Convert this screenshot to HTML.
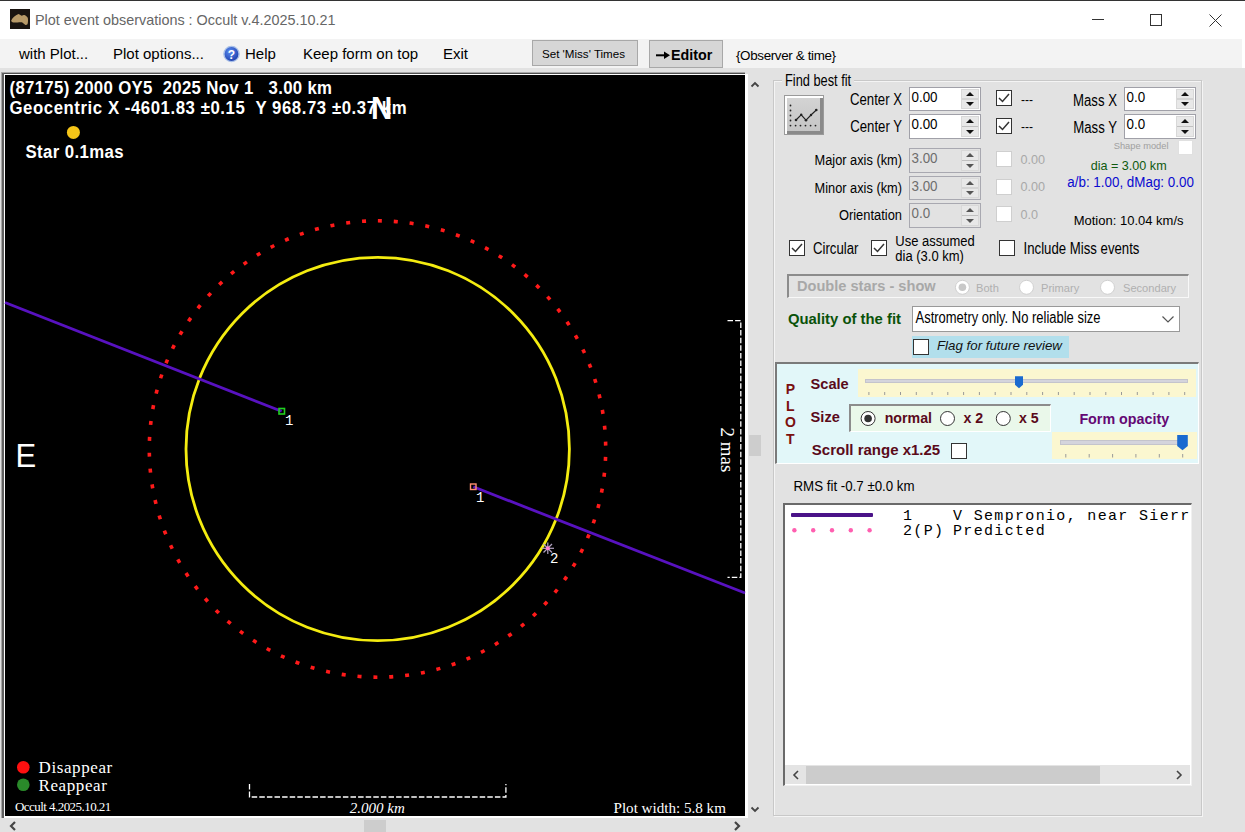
<!DOCTYPE html><html><head><meta charset="utf-8"><style>
html,body{margin:0;padding:0;}
body{width:1245px;height:832px;overflow:hidden;position:relative;background:#e2e2e2;font-family:"Liberation Sans",sans-serif;}
.t{position:absolute;white-space:pre;}
.b{position:absolute;box-sizing:border-box;}
svg{position:absolute;left:0;top:0;}
</style></head><body>
<div class="b" style="left:0px;top:0px;width:1245px;height:39px;background:#fff;"></div>
<div class="b" style="left:0px;top:0px;width:1245px;height:1px;background:#333;"></div>
<svg width="1245" height="40" style="left:0;top:0">
<rect x="10" y="9" width="20" height="20" fill="#1a1410"/>
<path d="M11.2 20.5 C12.5 18 15 15.5 18.5 14.1 C20 14.5 21 15.8 21.8 15.8 C23 15 23.8 14.8 24.5 15.1 C26.5 16 27.8 17.5 27.9 18.5 C28.2 21 27.9 23.5 27.5 24.2 C26.8 25 25.8 25 25.5 24.9 C24 24 23 22.5 21.8 22.2 C19 22 15.5 22.8 13.4 22.5 C12 22.2 11.2 21.5 11.2 20.5Z" fill="#b89a68"/>
<line x1="1092" y1="19.5" x2="1104" y2="19.5" stroke="#333" stroke-width="1"/>
<rect x="1150.5" y="14.5" width="11" height="11" fill="none" stroke="#333" stroke-width="1"/>
<path d="M1209.5 14.5 L1221.5 26.5 M1221.5 14.5 L1209.5 26.5" stroke="#333" stroke-width="1"/>
</svg>
<div class="t" style="left:35px;top:12.81px;font-size:14.4px;line-height:14.4px;font-family:'Liberation Sans', sans-serif;font-weight:normal;font-style:normal;color:#666;">Plot event observations : Occult v.4.2025.10.21</div>
<div class="b" style="left:0px;top:39px;width:1245px;height:29px;background:#fff;"></div>
<div class="b" style="left:0px;top:39px;width:1242px;height:29px;background:#f3f3f3;"></div>
<div class="t" style="left:19px;top:46.30px;font-size:15px;line-height:15px;font-family:'Liberation Sans', sans-serif;font-weight:normal;font-style:normal;color:#000;">with Plot...</div>
<div class="t" style="left:113px;top:46.30px;font-size:15px;line-height:15px;font-family:'Liberation Sans', sans-serif;font-weight:normal;font-style:normal;color:#000;">Plot options...</div>
<svg width="1245" height="80" style="left:0;top:0">
<defs><radialGradient id="hg" cx="0.4" cy="0.35" r="0.7"><stop offset="0" stop-color="#5a8cf0"/><stop offset="1" stop-color="#1a3aa8"/></radialGradient></defs>
<circle cx="231.5" cy="54" r="7.6" fill="url(#hg)" stroke="#a8c0e8" stroke-width="1.4"/>
<text x="231.5" y="59" text-anchor="middle" font-family="Liberation Sans" font-weight="bold" font-size="12" fill="#fff">?</text>
</svg>
<div class="t" style="left:245px;top:46.30px;font-size:15px;line-height:15px;font-family:'Liberation Sans', sans-serif;font-weight:normal;font-style:normal;color:#000;">Help</div>
<div class="t" style="left:303px;top:46.30px;font-size:15px;line-height:15px;font-family:'Liberation Sans', sans-serif;font-weight:normal;font-style:normal;color:#000;">Keep form on top</div>
<div class="t" style="left:443px;top:46.30px;font-size:15px;line-height:15px;font-family:'Liberation Sans', sans-serif;font-weight:normal;font-style:normal;color:#000;">Exit</div>
<div class="b" style="left:532px;top:40px;width:106px;height:26px;background:#d6d6d6;border:1px solid #a8a8a8;"></div>
<div class="t" style="left:542px;top:47.68px;font-size:11.6px;line-height:11.6px;font-family:'Liberation Sans', sans-serif;font-weight:normal;font-style:normal;color:#000;">Set &#x27;Miss&#x27; Times</div>
<div class="b" style="left:649px;top:40px;width:74px;height:28px;background:#d6d6d6;border:1px solid #a8a8a8;"></div>
<div class="t" style="left:671px;top:47.60px;font-size:14.3px;line-height:14.3px;font-family:'Liberation Sans', sans-serif;font-weight:bold;font-style:normal;color:#000;">Editor</div>
<svg width="1245" height="80" style="left:0;top:0"><path d="M656 55.3 H666" stroke="#000" stroke-width="2"/><path d="M664 51.5 L670 55.3 L664 59.1Z" fill="#000"/></svg>
<div class="t" style="left:736px;top:49.46px;font-size:13.4px;line-height:13.4px;font-family:'Liberation Sans', sans-serif;font-weight:normal;font-style:normal;color:#000;letter-spacing:-0.35px;">{Observer &amp; time}</div>
<div class="b" style="left:4px;top:74px;width:744px;height:744px;background:#fff;"></div>
<div class="b" style="left:1px;top:72px;width:744px;height:1px;background:#a8a8a8;"></div>
<div class="b" style="left:1px;top:73px;width:744px;height:1px;background:#505050;"></div>
<div class="b" style="left:1px;top:72px;width:1px;height:746px;background:#a8a8a8;"></div>
<div class="b" style="left:2px;top:73px;width:2px;height:745px;background:#606060;"></div>
<div class="b" style="left:5px;top:75px;width:740px;height:741px;background:#000;"></div>
<svg width="1245" height="832" style="left:0;top:0">
<path d="M751.5 86.5 L755 83 L758.5 86.5" stroke="#444" stroke-width="1.8" fill="none"/>
<path d="M751.5 807.5 L755 811 L758.5 807.5" stroke="#444" stroke-width="1.8" fill="none"/>
<rect x="749" y="435" width="12" height="21" fill="#cdcdcd"/>
<path d="M15 822 L11 826 L15 830" stroke="#444" stroke-width="2.2" fill="none"/>
<path d="M735 822 L739 826 L735 830" stroke="#444" stroke-width="2.2" fill="none"/>
<rect x="364" y="820" width="22" height="12" fill="#cdcdcd"/>
</svg>
<svg width="1245" height="832" style="left:0;top:0">
<circle cx="377.5" cy="449" r="228.2" fill="none" stroke="#ff1a1a" stroke-width="3.6" stroke-dasharray="4 11.931" stroke-dashoffset="-7.95"/>
<circle cx="377.7" cy="449" r="191.7" fill="none" stroke="#f4ec10" stroke-width="2.8"/>
<line x1="5" y1="302.5" x2="281.6" y2="411.3" stroke="#5812c0" stroke-width="2.8"/>
<line x1="473.3" y1="486.8" x2="745" y2="593" stroke="#5812c0" stroke-width="2.8"/>
<rect x="279" y="408.5" width="5.5" height="5.5" fill="none" stroke="#20d020" stroke-width="1.6"/>
<rect x="470.5" y="484" width="5.5" height="5.5" fill="none" stroke="#ff9070" stroke-width="1.4"/>
<g stroke="#b0a0c0" stroke-width="1.2">
<line x1="542" y1="548.3" x2="554" y2="548.3"/><line x1="547.8" y1="542.5" x2="547.8" y2="554"/>
<line x1="543.5" y1="544" x2="552" y2="552.5"/><line x1="552" y1="544" x2="543.5" y2="552.5"/>
</g>
<circle cx="547.8" cy="548.3" r="2" fill="#ff80d0"/>
<circle cx="73.4" cy="132.4" r="6.5" fill="#f5c518"/>
<circle cx="23.3" cy="767.3" r="6.3" fill="#ff1010"/>
<circle cx="23.3" cy="784.7" r="6.3" fill="#2a8a2a"/>
<g stroke="#fff" stroke-width="1.3" stroke-dasharray="5.5 2.1" fill="none">
<path d="M727.5 320.6 L740.8 320.6 L740.8 577.4 L727.5 577.4"/>
<path d="M249.5 784 L249.5 797 L505.9 797 L505.9 784"/>
</g>
</svg>
<div class="t" style="left:9.5px;top:80.78px;font-size:16.8px;line-height:16.8px;font-family:'Liberation Sans', sans-serif;font-weight:bold;font-style:normal;color:#fff;letter-spacing:0.32px;transform:scaleY(1.08);transform-origin:0 14.22px;">(87175) 2000 OY5  2025 Nov 1   3.00 km</div>
<div class="t" style="left:9.5px;top:100.78px;font-size:16.8px;line-height:16.8px;font-family:'Liberation Sans', sans-serif;font-weight:bold;font-style:normal;color:#fff;letter-spacing:0.55px;transform:scaleY(1.08);transform-origin:0 14.22px;">Geocentric X -4601.83 ±0.15  Y 968.73 ±0.37 km</div>
<div class="t" style="left:25.5px;top:144.78px;font-size:16.8px;line-height:16.8px;font-family:'Liberation Sans', sans-serif;font-weight:bold;font-style:normal;color:#fff;letter-spacing:0.38px;transform:scaleY(1.05);transform-origin:0 14.22px;">Star 0.1mas</div>
<div class="t" style="left:371px;top:94.03px;font-size:29.5px;line-height:29.5px;font-family:'Liberation Sans', sans-serif;font-weight:bold;font-style:normal;color:#fff;transform:scaleY(1.08);transform-origin:0 24.97px;">N</div>
<div class="t" style="left:15.5px;top:440.76px;font-size:31px;line-height:31px;font-family:'Liberation Sans', sans-serif;font-weight:normal;font-style:normal;color:#fff;transform:scaleY(1.05);transform-origin:0 26.24px;">E</div>
<div class="t" style="left:285px;top:414.27px;font-size:14px;line-height:14px;font-family:'Liberation Mono', monospace;font-weight:normal;font-style:normal;color:#fff;">1</div>
<div class="t" style="left:476px;top:490.97px;font-size:14px;line-height:14px;font-family:'Liberation Mono', monospace;font-weight:normal;font-style:normal;color:#fff;">1</div>
<div class="t" style="left:550px;top:551.87px;font-size:14px;line-height:14px;font-family:'Liberation Mono', monospace;font-weight:normal;font-style:normal;color:#fff;">2</div>
<div class="t" style="left:38.5px;top:759.36px;font-size:17px;line-height:17px;font-family:'Liberation Serif', serif;font-weight:normal;font-style:normal;color:#fff;letter-spacing:0.6px;">Disappear</div>
<div class="t" style="left:38.5px;top:777.16px;font-size:17px;line-height:17px;font-family:'Liberation Serif', serif;font-weight:normal;font-style:normal;color:#fff;letter-spacing:0.6px;">Reappear</div>
<div class="t" style="left:15px;top:800.31px;font-size:13px;line-height:13px;font-family:'Liberation Serif', serif;font-weight:normal;font-style:normal;color:#fff;letter-spacing:-0.55px;">Occult 4.2025.10.21</div>
<div class="t" style="left:613.5px;top:801.15px;font-size:15.1px;line-height:15.1px;font-family:'Liberation Serif', serif;font-weight:normal;font-style:normal;color:#fff;">Plot width: 5.8 km</div>
<div class="t" style="left:349.8px;top:801.14px;font-size:15px;line-height:15px;font-family:'Liberation Serif', serif;font-weight:normal;font-style:italic;color:#fff;">2.000 km</div>
<div class="t" style="left:696.5px;top:441px;width:60px;height:18px;font-family:'Liberation Serif';font-size:19px;line-height:18px;color:#fff;transform-origin:30px 9px;transform:rotate(90deg);text-align:center;">2 mas</div>
<div class="b" style="left:773px;top:80px;width:429px;height:736px;border:1px solid #c8c8c8;box-shadow:1px 1px 0 #f4f4f4, inset 1px 1px 0 #f4f4f4;"></div>
<div class="b" style="left:782px;top:74px;width:72px;height:12px;background:#e2e2e2;"></div>
<div class="t" style="left:785px;top:76.16px;font-size:12.8px;line-height:12.8px;font-family:'Liberation Sans', sans-serif;font-weight:normal;font-style:normal;color:#000;transform:scaleY(1.25);transform-origin:0 10.84px;">Find best fit</div>
<div class="b" style="left:784px;top:95px;width:40px;height:40px;background:linear-gradient(#d4d4d4,#c4c4c4);border:1px solid #9a9a9a;box-shadow:inset 2px 2px 0 #fff, inset -3px -3px 0 #8a8a8a;"></div>
<svg width="1245" height="832" style="left:0;top:0">
<g fill="#222"><circle cx="790.5" cy="105.5" r="0.9"/><circle cx="790.5" cy="110.5" r="0.9"/><circle cx="790.5" cy="115.5" r="0.9"/><circle cx="790.5" cy="120.5" r="0.9"/><circle cx="790.5" cy="125.6" r="0.9"/>
<circle cx="795.6" cy="125.6" r="0.9"/><circle cx="800.5" cy="125.6" r="0.9"/><circle cx="805.5" cy="125.6" r="0.9"/><circle cx="810.6" cy="125.6" r="0.9"/><circle cx="815.5" cy="125.6" r="0.9"/>
<circle cx="796" cy="120" r="1.3"/><circle cx="801.2" cy="114.8" r="1.2"/><circle cx="806" cy="120.2" r="1.3"/><circle cx="811" cy="115" r="1.2"/><circle cx="816.3" cy="110" r="1.3"/></g>
<polyline points="796,120 801.2,114.8 806,120.2 811,115 816.3,110" fill="none" stroke="#222" stroke-width="1.1"/>
</svg>
<div class="t" style="right:343px;top:93.83px;font-size:13.2px;line-height:13.2px;font-family:'Liberation Sans', sans-serif;font-weight:normal;font-style:normal;color:#000;transform:scaleY(1.2);transform-origin:0 11.17px;">Center X</div>
<div class="t" style="right:343px;top:121.33px;font-size:13.2px;line-height:13.2px;font-family:'Liberation Sans', sans-serif;font-weight:normal;font-style:normal;color:#000;transform:scaleY(1.2);transform-origin:0 11.17px;">Center Y</div>
<div class="b" style="left:909px;top:87px;width:72px;height:24px;background:#fff;border:1px solid #a0a0a8;"></div>
<div class="b" style="left:961px;top:89px;width:18px;height:20px;background:#e8e8e8;border:1px solid #d8d8d8;"></div>
<svg width="1245" height="832" style="left:0;top:0"><path d="M966 96 L970 92 L974 96Z M966 102 L970 106 L974 102Z" fill="#111"/><line x1="962" y1="99.0" x2="978" y2="99.0" stroke="#c0c0c0"/></svg>
<div class="t" style="left:911.5px;top:91.16px;font-size:13.4px;line-height:13.4px;font-family:'Liberation Sans', sans-serif;font-weight:normal;font-style:normal;color:#000;transform:scaleY(1.12);transform-origin:0 80%;">0.00</div>
<div class="b" style="left:909px;top:114px;width:72px;height:25px;background:#fff;border:1px solid #a0a0a8;"></div>
<div class="b" style="left:961px;top:116px;width:18px;height:21px;background:#e8e8e8;border:1px solid #d8d8d8;"></div>
<svg width="1245" height="832" style="left:0;top:0"><path d="M966 123 L970 119 L974 123Z M966 130 L970 134 L974 130Z" fill="#111"/><line x1="962" y1="126.5" x2="978" y2="126.5" stroke="#c0c0c0"/></svg>
<div class="t" style="left:911.5px;top:118.16px;font-size:13.4px;line-height:13.4px;font-family:'Liberation Sans', sans-serif;font-weight:normal;font-style:normal;color:#000;transform:scaleY(1.12);transform-origin:0 80%;">0.00</div>
<div class="b" style="left:996px;top:90px;width:16px;height:16px;background:#fff;border:1px solid #333;"></div>
<svg width="1245" height="832" style="left:0;top:0"><path d="M999 98 L1002.5 101.5 L1009 94" fill="none" stroke="#333" stroke-width="1.5"/></svg>
<div class="b" style="left:996px;top:118px;width:16px;height:16px;background:#fff;border:1px solid #333;"></div>
<svg width="1245" height="832" style="left:0;top:0"><path d="M999 126 L1002.5 129.5 L1009 122" fill="none" stroke="#333" stroke-width="1.5"/></svg>
<div class="t" style="left:1021px;top:93.84px;font-size:12px;line-height:12px;font-family:'Liberation Sans', sans-serif;font-weight:normal;font-style:normal;color:#000;">---</div>
<div class="t" style="left:1021px;top:121.34px;font-size:12px;line-height:12px;font-family:'Liberation Sans', sans-serif;font-weight:normal;font-style:normal;color:#000;">---</div>
<div class="t" style="right:128px;top:94.53px;font-size:13.2px;line-height:13.2px;font-family:'Liberation Sans', sans-serif;font-weight:normal;font-style:normal;color:#000;transform:scaleY(1.2);transform-origin:0 11.17px;">Mass X</div>
<div class="t" style="right:128px;top:122.23px;font-size:13.2px;line-height:13.2px;font-family:'Liberation Sans', sans-serif;font-weight:normal;font-style:normal;color:#000;transform:scaleY(1.2);transform-origin:0 11.17px;">Mass Y</div>
<div class="b" style="left:1124px;top:87px;width:72px;height:24px;background:#fff;border:1px solid #a0a0a8;"></div>
<div class="b" style="left:1176px;top:89px;width:18px;height:20px;background:#e8e8e8;border:1px solid #d8d8d8;"></div>
<svg width="1245" height="832" style="left:0;top:0"><path d="M1181 96 L1185 92 L1189 96Z M1181 102 L1185 106 L1189 102Z" fill="#111"/><line x1="1177" y1="99.0" x2="1193" y2="99.0" stroke="#c0c0c0"/></svg>
<div class="t" style="left:1126.5px;top:91.16px;font-size:13.4px;line-height:13.4px;font-family:'Liberation Sans', sans-serif;font-weight:normal;font-style:normal;color:#000;transform:scaleY(1.12);transform-origin:0 80%;">0.0</div>
<div class="b" style="left:1124px;top:114px;width:72px;height:25px;background:#fff;border:1px solid #a0a0a8;"></div>
<div class="b" style="left:1176px;top:116px;width:18px;height:21px;background:#e8e8e8;border:1px solid #d8d8d8;"></div>
<svg width="1245" height="832" style="left:0;top:0"><path d="M1181 123 L1185 119 L1189 123Z M1181 130 L1185 134 L1189 130Z" fill="#111"/><line x1="1177" y1="126.5" x2="1193" y2="126.5" stroke="#c0c0c0"/></svg>
<div class="t" style="left:1126.5px;top:118.16px;font-size:13.4px;line-height:13.4px;font-family:'Liberation Sans', sans-serif;font-weight:normal;font-style:normal;color:#000;transform:scaleY(1.12);transform-origin:0 80%;">0.0</div>
<div class="t" style="left:1113.7px;top:141.63px;font-size:9.3px;line-height:9.3px;font-family:'Liberation Sans', sans-serif;font-weight:normal;font-style:normal;color:#a0a0a0;">Shape model</div>
<div class="b" style="left:1178px;top:140px;width:15px;height:15px;background:#fff;border:1px solid #e0e0e0;"></div>
<div class="t" style="right:343px;top:155.46px;font-size:12.8px;line-height:12.8px;font-family:'Liberation Sans', sans-serif;font-weight:normal;font-style:normal;color:#000;transform:scaleY(1.2);transform-origin:0 10.84px;">Major axis (km)</div>
<div class="t" style="right:343px;top:183.46px;font-size:12.8px;line-height:12.8px;font-family:'Liberation Sans', sans-serif;font-weight:normal;font-style:normal;color:#000;transform:scaleY(1.2);transform-origin:0 10.84px;">Minor axis (km)</div>
<div class="t" style="right:343px;top:210.08px;font-size:12.9px;line-height:12.9px;font-family:'Liberation Sans', sans-serif;font-weight:normal;font-style:normal;color:#000;transform:scaleY(1.2);transform-origin:0 10.92px;">Orientation</div>
<div class="b" style="left:909px;top:148px;width:72px;height:25px;background:#e2e2e2;border:1px solid #a8a8b0;"></div>
<div class="b" style="left:961px;top:150px;width:18px;height:21px;background:#e8e8e8;border:1px solid #d8d8d8;"></div>
<svg width="1245" height="832" style="left:0;top:0"><path d="M966 157 L970 153 L974 157Z M966 164 L970 168 L974 164Z" fill="#555"/><line x1="962" y1="160.5" x2="978" y2="160.5" stroke="#c0c0c0"/></svg>
<div class="t" style="left:911.5px;top:152.16px;font-size:13.4px;line-height:13.4px;font-family:'Liberation Sans', sans-serif;font-weight:normal;font-style:normal;color:#6d6d6d;transform:scaleY(1.12);transform-origin:0 80%;">3.00</div>
<div class="b" style="left:909px;top:176px;width:72px;height:24px;background:#e2e2e2;border:1px solid #a8a8b0;"></div>
<div class="b" style="left:961px;top:178px;width:18px;height:20px;background:#e8e8e8;border:1px solid #d8d8d8;"></div>
<svg width="1245" height="832" style="left:0;top:0"><path d="M966 185 L970 181 L974 185Z M966 191 L970 195 L974 191Z" fill="#555"/><line x1="962" y1="188.0" x2="978" y2="188.0" stroke="#c0c0c0"/></svg>
<div class="t" style="left:911.5px;top:180.16px;font-size:13.4px;line-height:13.4px;font-family:'Liberation Sans', sans-serif;font-weight:normal;font-style:normal;color:#6d6d6d;transform:scaleY(1.12);transform-origin:0 80%;">3.00</div>
<div class="b" style="left:909px;top:203px;width:72px;height:25px;background:#e2e2e2;border:1px solid #a8a8b0;"></div>
<div class="b" style="left:961px;top:205px;width:18px;height:21px;background:#e8e8e8;border:1px solid #d8d8d8;"></div>
<svg width="1245" height="832" style="left:0;top:0"><path d="M966 212 L970 208 L974 212Z M966 219 L970 223 L974 219Z" fill="#555"/><line x1="962" y1="215.5" x2="978" y2="215.5" stroke="#c0c0c0"/></svg>
<div class="t" style="left:911.5px;top:207.16px;font-size:13.4px;line-height:13.4px;font-family:'Liberation Sans', sans-serif;font-weight:normal;font-style:normal;color:#6d6d6d;transform:scaleY(1.12);transform-origin:0 80%;">0.0</div>
<div class="b" style="left:996px;top:151px;width:16px;height:16px;background:#fff;border:1px solid #cfcfcf;"></div>
<div class="b" style="left:996px;top:179px;width:16px;height:16px;background:#fff;border:1px solid #cfcfcf;"></div>
<div class="b" style="left:996px;top:206px;width:16px;height:16px;background:#fff;border:1px solid #cfcfcf;"></div>
<div class="t" style="left:1020.4px;top:153.83px;font-size:12.6px;line-height:12.6px;font-family:'Liberation Sans', sans-serif;font-weight:normal;font-style:normal;color:#a8a8a8;">0.00</div>
<div class="t" style="left:1020.4px;top:181.33px;font-size:12.6px;line-height:12.6px;font-family:'Liberation Sans', sans-serif;font-weight:normal;font-style:normal;color:#a8a8a8;">0.00</div>
<div class="t" style="left:1020.4px;top:208.83px;font-size:12.6px;line-height:12.6px;font-family:'Liberation Sans', sans-serif;font-weight:normal;font-style:normal;color:#a8a8a8;">0.0</div>
<div class="t" style="left:1090.7px;top:159.83px;font-size:12.6px;line-height:12.6px;font-family:'Liberation Sans', sans-serif;font-weight:normal;font-style:normal;color:#105a10;transform:scaleY(1.08);transform-origin:0 10.67px;">dia = 3.00 km</div>
<div class="t" style="left:1067.3px;top:176.16px;font-size:13.4px;line-height:13.4px;font-family:'Liberation Sans', sans-serif;font-weight:normal;font-style:normal;color:#0a0ad0;transform:scaleY(1.05);transform-origin:0 11.34px;">a/b: 1.00, dMag: 0.00</div>
<div class="t" style="left:1073.7px;top:213.70px;font-size:13px;line-height:13px;font-family:'Liberation Sans', sans-serif;font-weight:normal;font-style:normal;color:#000;">Motion: 10.04 km/s</div>
<div class="b" style="left:789px;top:240px;width:16px;height:16px;background:#fff;border:1px solid #333;"></div>
<svg width="1245" height="832" style="left:0;top:0"><path d="M792 248 L795.5 251.5 L802 244" fill="none" stroke="#333" stroke-width="1.5"/></svg>
<div class="t" style="left:813px;top:242.53px;font-size:13.2px;line-height:13.2px;font-family:'Liberation Sans', sans-serif;font-weight:normal;font-style:normal;color:#000;transform:scaleY(1.2);transform-origin:0 11.17px;">Circular</div>
<div class="b" style="left:871px;top:240px;width:16px;height:16px;background:#fff;border:1px solid #333;"></div>
<svg width="1245" height="832" style="left:0;top:0"><path d="M874 248 L877.5 251.5 L884 244" fill="none" stroke="#333" stroke-width="1.5"/></svg>
<div class="t" style="left:895.3px;top:235.00px;font-size:13px;line-height:13px;font-family:'Liberation Sans', sans-serif;font-weight:normal;font-style:normal;color:#000;transform:scaleY(1.12);transform-origin:0 11.00px;">Use assumed</div>
<div class="t" style="left:895.3px;top:250.00px;font-size:13px;line-height:13px;font-family:'Liberation Sans', sans-serif;font-weight:normal;font-style:normal;color:#000;transform:scaleY(1.12);transform-origin:0 11.00px;">dia (3.0 km)</div>
<div class="b" style="left:999px;top:240px;width:16px;height:16px;background:#fff;border:1px solid #333;"></div>
<div class="t" style="left:1023.6px;top:242.53px;font-size:13.2px;line-height:13.2px;font-family:'Liberation Sans', sans-serif;font-weight:normal;font-style:normal;color:#000;transform:scaleY(1.2);transform-origin:0 11.17px;">Include Miss events</div>
<div class="b" style="left:787px;top:274px;width:402px;height:24px;border-top:2px solid #8c8c8c;border-left:2px solid #8c8c8c;border-bottom:1px solid #f8f8f8;border-right:1px solid #f8f8f8;"></div>
<div class="t" style="left:797px;top:278.84px;font-size:14.6px;line-height:14.6px;font-family:'Liberation Sans', sans-serif;font-weight:bold;font-style:normal;color:#a8a8a8;">Double stars - show</div>
<svg width="1245" height="832" style="left:0;top:0"><circle cx="962.4" cy="287.3" r="7.0" fill="#fff" stroke="#d0d0d0" stroke-width="1"/><circle cx="962.4" cy="287.3" r="3.8" fill="#c8c8c8"/></svg>
<div class="t" style="left:976px;top:282.60px;font-size:11.1px;line-height:11.1px;font-family:'Liberation Sans', sans-serif;font-weight:normal;font-style:normal;color:#b0b0b0;">Both</div>
<svg width="1245" height="832" style="left:0;top:0"><circle cx="1026.5" cy="287.3" r="7.0" fill="#fff" stroke="#d0d0d0" stroke-width="1"/></svg>
<div class="t" style="left:1041px;top:282.60px;font-size:11.1px;line-height:11.1px;font-family:'Liberation Sans', sans-serif;font-weight:normal;font-style:normal;color:#b0b0b0;">Primary</div>
<svg width="1245" height="832" style="left:0;top:0"><circle cx="1107.5" cy="287.3" r="7.0" fill="#fff" stroke="#d0d0d0" stroke-width="1"/></svg>
<div class="t" style="left:1123px;top:282.60px;font-size:11.1px;line-height:11.1px;font-family:'Liberation Sans', sans-serif;font-weight:normal;font-style:normal;color:#b0b0b0;">Secondary</div>
<div class="t" style="left:788px;top:311.73px;font-size:14.85px;line-height:14.85px;font-family:'Liberation Sans', sans-serif;font-weight:bold;font-style:normal;color:#0a520a;">Quality of the fit</div>
<div class="b" style="left:912px;top:306px;width:268px;height:26px;background:#fff;border:1px solid #999;"></div>
<div class="t" style="left:915.5px;top:312.72px;font-size:12.97px;line-height:12.97px;font-family:'Liberation Sans', sans-serif;font-weight:normal;font-style:normal;color:#000;transform:scaleY(1.2);transform-origin:0 10.98px;">Astrometry only. No reliable size</div>
<svg width="1245" height="832" style="left:0;top:0"><path d="M1162.5 316.5 L1168 322 L1173.5 316.5" fill="none" stroke="#555" stroke-width="1.2"/></svg>
<div class="b" style="left:912px;top:336px;width:157px;height:22px;background:#b2dfec;"></div>
<div class="b" style="left:913px;top:339px;width:16px;height:16px;background:#fff;border:1px solid #333;"></div>
<div class="t" style="left:937px;top:339.14px;font-size:13.3px;line-height:13.3px;font-family:'Liberation Sans', sans-serif;font-weight:normal;font-style:italic;color:#111;">Flag for future review</div>
<div class="b" style="left:775px;top:362px;width:424px;height:102px;background:#e2f7f9;border-top:2px solid #7a7a7a;border-left:2px solid #7a7a7a;border-bottom:1px solid #fff;border-right:1px solid #fff;"></div>
<div class="t" style="left:790.4px;top:381.65px;font-size:14px;line-height:14px;font-family:'Liberation Sans', sans-serif;font-weight:bold;font-style:normal;color:#7a1010;transform:translateX(-50%);">P</div>
<div class="t" style="left:790.4px;top:399.15px;font-size:14px;line-height:14px;font-family:'Liberation Sans', sans-serif;font-weight:bold;font-style:normal;color:#7a1010;transform:translateX(-50%);">L</div>
<div class="t" style="left:790.4px;top:415.15px;font-size:14px;line-height:14px;font-family:'Liberation Sans', sans-serif;font-weight:bold;font-style:normal;color:#7a1010;transform:translateX(-50%);">O</div>
<div class="t" style="left:790.4px;top:431.65px;font-size:14px;line-height:14px;font-family:'Liberation Sans', sans-serif;font-weight:bold;font-style:normal;color:#7a1010;transform:translateX(-50%);">T</div>
<div class="t" style="left:810.6px;top:376.94px;font-size:14.6px;line-height:14.6px;font-family:'Liberation Sans', sans-serif;font-weight:bold;font-style:normal;color:#5a0a1a;">Scale</div>
<div class="b" style="left:858px;top:369px;width:338px;height:28px;background:#fbf7d0;"></div>
<div class="b" style="left:865px;top:379px;width:323px;height:4px;background:#d4d4dc;border:1px solid #c4c4cc;"></div>
<svg width='1245' height='832' style='left:0;top:0'><g stroke='#999'><line x1='868.9' y1='392' x2='868.9' y2='395'/><line x1='884.7' y1='392' x2='884.7' y2='395'/><line x1='900.5' y1='392' x2='900.5' y2='395'/><line x1='916.3' y1='392' x2='916.3' y2='395'/><line x1='932.1' y1='392' x2='932.1' y2='395'/><line x1='947.8' y1='392' x2='947.8' y2='395'/><line x1='963.6' y1='392' x2='963.6' y2='395'/><line x1='979.4' y1='392' x2='979.4' y2='395'/><line x1='995.2' y1='392' x2='995.2' y2='395'/><line x1='1011.0' y1='392' x2='1011.0' y2='395'/><line x1='1026.8' y1='392' x2='1026.8' y2='395'/><line x1='1042.6' y1='392' x2='1042.6' y2='395'/><line x1='1058.4' y1='392' x2='1058.4' y2='395'/><line x1='1074.2' y1='392' x2='1074.2' y2='395'/><line x1='1090.0' y1='392' x2='1090.0' y2='395'/><line x1='1105.8' y1='392' x2='1105.8' y2='395'/><line x1='1121.5' y1='392' x2='1121.5' y2='395'/><line x1='1137.3' y1='392' x2='1137.3' y2='395'/><line x1='1153.1' y1='392' x2='1153.1' y2='395'/><line x1='1168.9' y1='392' x2='1168.9' y2='395'/><line x1='1184.7' y1='392' x2='1184.7' y2='395'/></g><path d='M1015 376.3 h8 v8.5 l-4 3.5 l-4 -3.5z' fill='#1a6ad0'/></svg>
<div class="t" style="left:810.6px;top:410.44px;font-size:14.6px;line-height:14.6px;font-family:'Liberation Sans', sans-serif;font-weight:bold;font-style:normal;color:#5a0a1a;">Size</div>
<div class="b" style="left:849px;top:404px;width:202px;height:28px;background:#eaf8ea;border-top:2px solid #8c8c8c;border-left:2px solid #8c8c8c;border-bottom:1px solid #fff;border-right:1px solid #fff;"></div>
<svg width="1245" height="832" style="left:0;top:0"><circle cx="868.1" cy="418.5" r="7.0" fill="#fff" stroke="#333" stroke-width="1"/><circle cx="868.1" cy="418.5" r="3.8" fill="#333"/></svg>
<div class="t" style="left:884.7px;top:411.48px;font-size:14.2px;line-height:14.2px;font-family:'Liberation Sans', sans-serif;font-weight:bold;font-style:normal;color:#5a0a1a;">normal</div>
<svg width="1245" height="832" style="left:0;top:0"><circle cx="947.5" cy="418.5" r="7.0" fill="#fff" stroke="#333" stroke-width="1"/></svg>
<div class="t" style="left:963.4px;top:411.48px;font-size:14.2px;line-height:14.2px;font-family:'Liberation Sans', sans-serif;font-weight:bold;font-style:normal;color:#5a0a1a;">x 2</div>
<svg width="1245" height="832" style="left:0;top:0"><circle cx="1003.3" cy="418.5" r="7.0" fill="#fff" stroke="#333" stroke-width="1"/></svg>
<div class="t" style="left:1019px;top:411.48px;font-size:14.2px;line-height:14.2px;font-family:'Liberation Sans', sans-serif;font-weight:bold;font-style:normal;color:#5a0a1a;">x 5</div>
<div class="t" style="left:1079.4px;top:411.50px;font-size:14.3px;line-height:14.3px;font-family:'Liberation Sans', sans-serif;font-weight:bold;font-style:normal;color:#640874;">Form opacity</div>
<div class="t" style="left:811.8px;top:442.10px;font-size:15px;line-height:15px;font-family:'Liberation Sans', sans-serif;font-weight:bold;font-style:normal;color:#5a0a1a;">Scroll range x1.25</div>
<div class="b" style="left:951px;top:443px;width:16px;height:16px;background:#fff;border:1px solid #333;"></div>
<div class="b" style="left:1052px;top:432px;width:145px;height:27px;background:#fbf7d0;"></div>
<div class="b" style="left:1060px;top:440px;width:127px;height:5px;background:#d4d4dc;border:1px solid #c4c4cc;"></div>
<svg width='1245' height='832' style='left:0;top:0'><g stroke='#999'><line x1='1065.8' y1='454' x2='1065.8' y2='457.5'/><line x1='1089.2' y1='454' x2='1089.2' y2='457.5'/><line x1='1112.6' y1='454' x2='1112.6' y2='457.5'/><line x1='1135.9' y1='454' x2='1135.9' y2='457.5'/><line x1='1159.3' y1='454' x2='1159.3' y2='457.5'/><line x1='1182.7' y1='454' x2='1182.7' y2='457.5'/></g><path d='M1177.2 435 h10.6 v11 l-5.3 4.2 l-5.3 -4.2z' fill='#1a6ad0'/></svg>
<div class="t" style="left:793.5px;top:479.74px;font-size:13.3px;line-height:13.3px;font-family:'Liberation Sans', sans-serif;font-weight:normal;font-style:normal;color:#000;transform:scaleY(1.08);transform-origin:0 100%;">RMS fit -0.7 ±0.0 km</div>
<div class="b" style="left:783px;top:503px;width:409px;height:283px;background:#fff;border-top:2px solid #6a6a6a;border-left:2px solid #6a6a6a;border-bottom:1px solid #f0f0f0;border-right:1px solid #f0f0f0;"></div>
<div class="b" style="left:791px;top:512.5px;width:82px;height:4px;background:#4a1288;border-radius:1px;"></div>
<svg width='1245' height='832' style='left:0;top:0'><g fill='#ff5fb0'><circle cx='794.4' cy='530.2' r='2.2'/><circle cx='813.2' cy='530.2' r='2.2'/><circle cx='832.0' cy='530.2' r='2.2'/><circle cx='850.8' cy='530.2' r='2.2'/><circle cx='869.6' cy='530.2' r='2.2'/></g></svg>
<div class="t" style="left:903px;top:509.00px;font-size:15px;line-height:15px;font-family:'Liberation Mono', monospace;font-weight:normal;font-style:normal;color:#000;letter-spacing:1.33px;">1</div>
<div class="t" style="left:953px;top:509.00px;font-size:15px;line-height:15px;font-family:'Liberation Mono', monospace;font-weight:normal;font-style:normal;color:#000;letter-spacing:1.33px;">V Sempronio, near Sierr</div>
<div class="t" style="left:903px;top:524.00px;font-size:15px;line-height:15px;font-family:'Liberation Mono', monospace;font-weight:normal;font-style:normal;color:#000;letter-spacing:1.33px;">2(P)</div>
<div class="t" style="left:953px;top:524.00px;font-size:15px;line-height:15px;font-family:'Liberation Mono', monospace;font-weight:normal;font-style:normal;color:#000;letter-spacing:1.33px;">Predicted</div>
<div class="b" style="left:785px;top:765px;width:405px;height:19px;background:#e4e4e4;"></div>
<div class="b" style="left:806px;top:766px;width:294px;height:18px;background:#cccccc;"></div>
<svg width='1245' height='832' style='left:0;top:0'><path d='M798 771 L794 775 L798 779 M1177 771 L1181 775 L1177 779' fill='none' stroke='#444' stroke-width='1.6'/></svg>
</body></html>
